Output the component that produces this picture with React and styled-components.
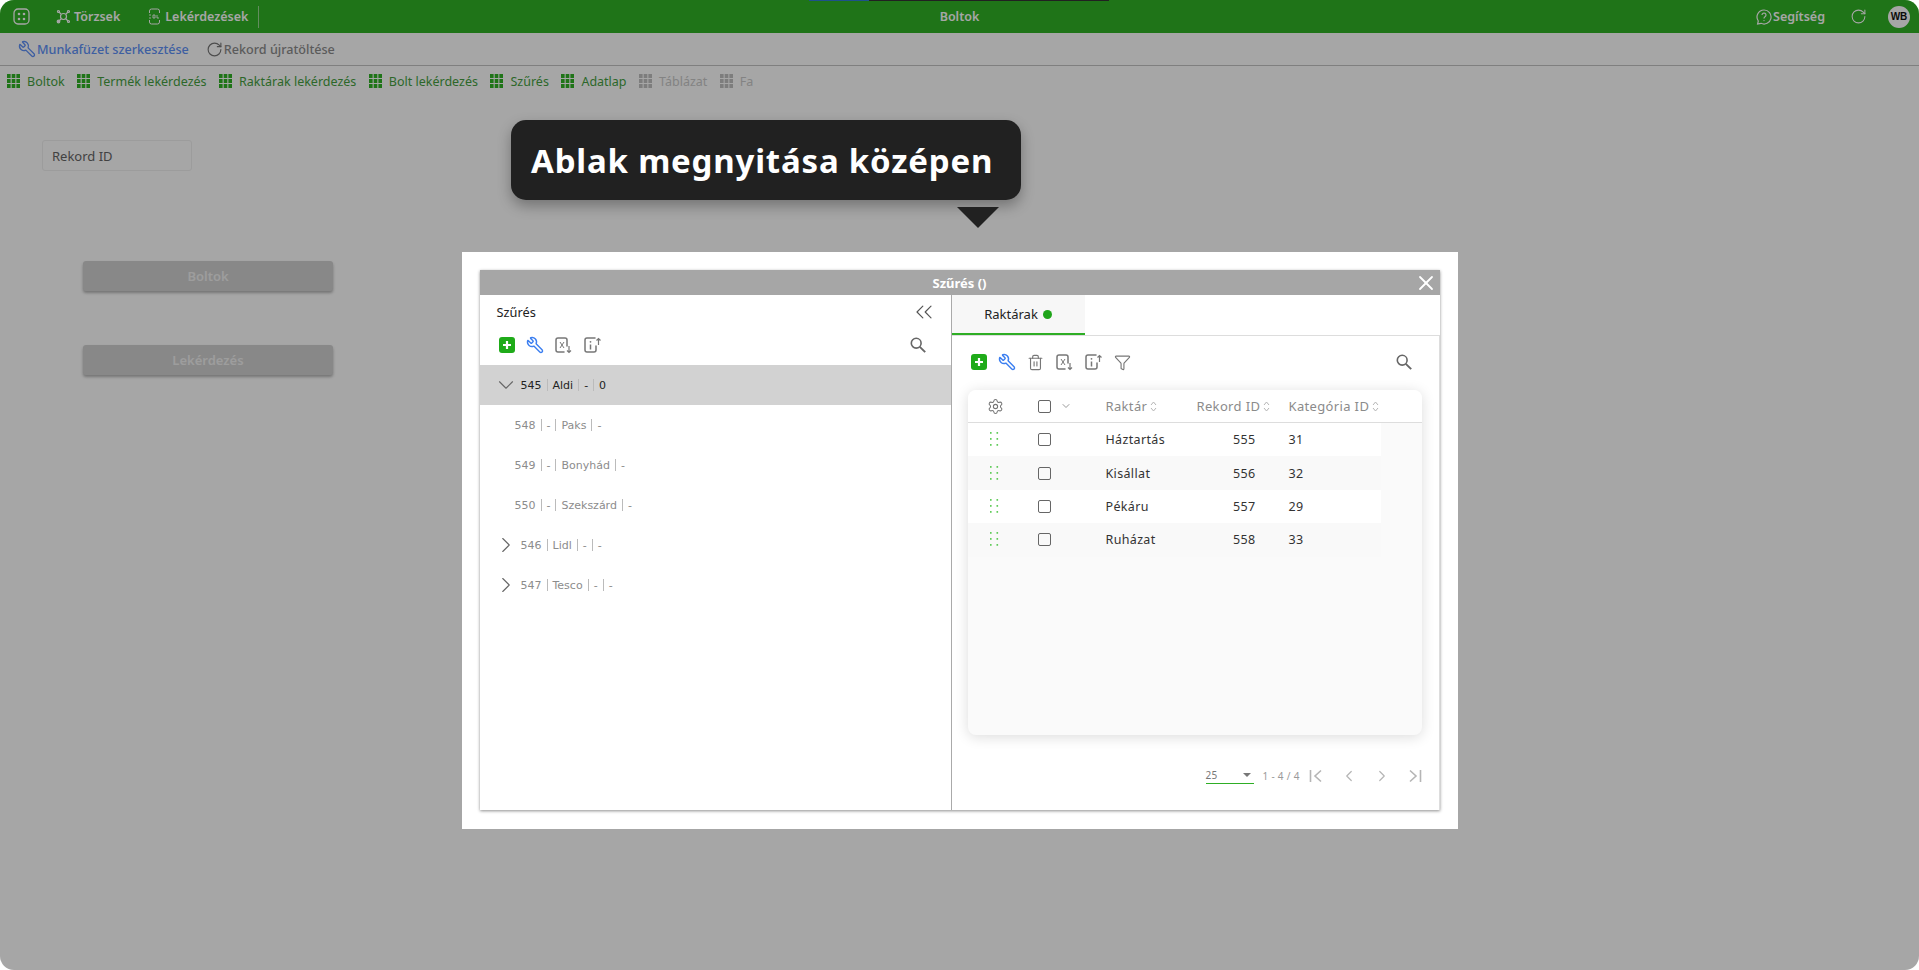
import React from "react";
import styled, { createGlobalStyle } from "styled-components";
import { Wrench, RotateCw, ChevronDown, ChevronRight, ChevronLeft, ChevronsLeft, Settings, Trash2, Funnel, X } from "lucide-react";

const Global = createGlobalStyle`
  html, body { margin: 0; padding: 0; background: #fff; overflow: hidden; }
  * { box-sizing: border-box; }
  #root { width: 1919px; height: 970px; }
`;

const Page = styled.div`
  position: relative;
  width: 1919px;
  height: 970px;
  background: #fff;
  border-radius: 14px;
  overflow: hidden;
  font-family: "Noto Sans", sans-serif;
`;

const Header = styled.header`
  position: relative;
  height: 33px;
  background: #30b226;
  color: #fff;
  display: flex;
  align-items: center;
  padding: 0 9px 0 13px;
  font-size: 12.5px;
  font-weight: 600;
`;
const HeaderItem = styled.div`
  display: flex;
  align-items: center;
  gap: ${(p) => p.$gap || 3}px;
  margin-left: ${(p) => p.$ml || 0}px;
`;
const Divider = styled.span`
  width: 1px;
  height: 22px;
  background: rgba(255, 255, 255, 0.5);
  margin-left: 10px;
`;
const HeaderTitle = styled.div`
  position: absolute;
  left: 0;
  right: 0;
  text-align: center;
  font-size: 12.5px;
  pointer-events: none;
`;
const ProgressBar = styled.div`
  position: absolute;
  left: 809px;
  top: 0;
  width: 300px;
  height: 1px;
  background: linear-gradient(to right, #2f7dd8 0 60px, #333 60px);
`;
const Spacer = styled.div`
  flex: 1;
`;
const Avatar = styled.div`
  width: 22px;
  height: 22px;
  border-radius: 50%;
  background: #fff;
  color: #111;
  font: 700 10px "Liberation Sans", sans-serif;
  display: flex;
  align-items: center;
  justify-content: center;
  margin-left: 21px;
`;

const ActionBar = styled.div`
  height: 33px;
  border-bottom: 1px solid #c4c4c4;
  display: flex;
  align-items: center;
  padding: 0 0 0 18px;
  font-size: 12.6px;
  font-weight: 500;
`;
const Action = styled.div`
  display: flex;
  align-items: center;
  gap: 1px;
  margin-right: 17px;
  color: ${(p) => (p.$blue ? "#6092f8" : "#8d8d8d")};
`;
const FlippedWrench = styled(Wrench)`
  transform: scaleX(-1);
  flex: none;
  margin: 0 ${(p) => p.$trim || 0}px;
`;

const TabBar = styled.nav`
  height: 30px;
  display: flex;
  align-items: center;
  padding-left: 7px;
  font-size: 12.5px;
`;
const SheetTab = styled.div`
  display: flex;
  align-items: center;
  gap: 7px;
  margin-right: 12.5px;
  color: ${(p) => (p.$off ? "#c9c9c9" : "#459f3f")};
`;

const Body = styled.main`
  padding: 44px 0 0 42px;
`;
const Field = styled.div`
  width: 150px;
  height: 31px;
  border: 1px solid #f0f0f0;
  border-radius: 3px;
  padding-left: 9px;
  display: flex;
  align-items: center;
  font-size: 13px;
  color: #666;
`;
const BigButton = styled.div`
  width: 250px;
  height: 30px;
  margin: ${(p) => p.$mt}px 0 0 41px;
  background: #d1d1d1;
  border-radius: 3px;
  box-shadow: 0 2px 3px rgba(0, 0, 0, 0.3);
  display: flex;
  align-items: center;
  justify-content: center;
  font-size: 13px;
  font-weight: 600;
  color: #f2f2f2;
`;

const Overlay = styled.div`
  position: absolute;
  inset: 0;
  background: rgba(0, 0, 0, 0.35);
  display: flex;
  justify-content: center;
  align-items: flex-start;
  padding-top: 252px;
`;
const Callout = styled.div`
  position: absolute;
  left: 511px;
  top: 120px;
  width: 510px;
  height: 80px;
  background: #212121;
  border-radius: 15px;
  box-shadow: 0 6px 14px rgba(0, 0, 0, 0.3);
  color: #fff;
  font-size: 33px;
  letter-spacing: 0.8px;
  font-weight: 700;
  display: flex;
  align-items: center;
  padding-left: 20px;
  &::after {
    content: "";
    position: absolute;
    left: 446px;
    top: 87px;
    border-left: 21px solid transparent;
    border-right: 21px solid transparent;
    border-top: 21px solid #212121;
  }
`;
const Modal = styled.div`
  width: 996px;
  height: 577px;
  background: #fff;
  padding: 18px;
`;
const Dialog = styled.div`
  height: 540px;
  display: flex;
  flex-direction: column;
  box-shadow: 0 1px 3px rgba(0, 0, 0, 0.45);
`;
const DialogTitle = styled.div`
  position: relative;
  height: 25px;
  flex: none;
  background: #a6a6a6;
  color: #fff;
  font-size: 13px;
  font-weight: 700;
  display: flex;
  align-items: center;
  justify-content: center;
`;
const CloseButton = styled.span`
  position: absolute;
  right: 2px;
  top: 1px;
  display: flex;
  color: #fff;
`;
const Split = styled.div`
  flex: 1;
  display: flex;
  min-height: 0;
`;
const LeftPane = styled.section`
  width: 472px;
  border-right: 1px solid #aaa;
  display: flex;
  flex-direction: column;
`;
const PaneHead = styled.div`
  height: 30px;
  display: flex;
  align-items: center;
  justify-content: space-between;
  padding: 4px 13px 0 17px;
  font-size: 12.8px;
  color: #222;
`;
const IconRow = styled.div`
  display: flex;
  align-items: center;
  height: ${(p) => p.$h}px;
  padding: ${(p) => p.$pad};
  gap: 12px;
  color: #8a8a8a;
`;
const TreeRow = styled.div`
  height: 40px;
  display: flex;
  align-items: center;
  padding-left: ${(p) => (p.$leaf ? 35 : 13)}px;
  background: ${(p) => (p.$selected ? "#d2d2d2" : "transparent")};
  color: ${(p) => (p.$selected ? "#222" : "#8c8c8c")};
  font: 11px "DejaVu Sans", sans-serif;
  white-space: pre;
`;
const Caret = styled.span`
  width: 26px;
  display: flex;
  margin-right: 2px;
  color: #666;
`;
const Sep = styled.span`
  display: inline-block;
  width: 1px;
  height: 12px;
  margin: 0 5px;
  background: #bbb;
`;
const RightPane = styled.section`
  flex: 1;
  display: flex;
  flex-direction: column;
  min-width: 0;
`;
const Tabs = styled.div`
  height: 41px;
  flex: none;
  border-bottom: 1px solid #ddd;
  display: flex;
`;
const Tab = styled.div`
  width: 133px;
  height: 40px;
  background: #f7f7f7;
  border-bottom: 2px solid #2eae25;
  display: flex;
  align-items: center;
  justify-content: center;
  gap: 5px;
  font-size: 13px;
  color: #222;
`;
const Dot = styled.span`
  width: 9px;
  height: 9px;
  border-radius: 50%;
  background: #1fa51a;
`;
const TabBody = styled.div`
  flex: 1;
  padding: 0 17px 0 16px;
  border-right: 1px solid #ddd;
`;
const Card = styled.div`
  height: 345px;
  background: #fafafa;
  border-radius: 8px;
  box-shadow: 0 2px 14px rgba(0, 0, 0, 0.14);
  overflow: hidden;
  color: #333;
  font-size: 12.5px;
  letter-spacing: 0.35px;
`;
const gridCols = "70px 68px 91px 92px 92px";
const HeadRow = styled.div`
  height: 33px;
  display: grid;
  grid-template-columns: ${gridCols};
  align-items: center;
  background: #fff;
  border-bottom: 1px solid #ddd;
  color: #8b8b8b;
  font-size: 13px;
`;
const DataRow = styled.div`
  height: 33.4px;
  width: 413px;
  display: grid;
  grid-template-columns: ${gridCols};
  align-items: center;
  background: ${(p) => (p.$alt ? "#f9f9f9" : "#fff")};
`;
const Cell = styled.div`
  display: flex;
  align-items: center;
  justify-content: ${(p) => (p.$right ? "flex-end" : "flex-start")};
  padding-right: ${(p) => (p.$right ? 33 : 0)}px;
  gap: ${(p) => p.$gap || 0}px;
  padding-left: ${(p) => p.$pl || 0}px;
`;
const Checkbox = styled.span`
  width: 13px;
  height: 13px;
  border: 1px solid #666;
  border-radius: 2px;
`;
const Pager = styled.div`
  height: 72px;
  margin-right: -17px;
  padding: 9px 0 0 238px;
  display: flex;
  align-items: center;
  color: #9a9a9a;
  font-size: 10px;
  letter-spacing: 0.3px;
  white-space: nowrap;
`;
const PageSelect = styled.div`
  flex: none;
  width: 48px;
  height: 17px;
  border-bottom: 1px solid #2eae25;
  display: flex;
  align-items: center;
  justify-content: space-between;
  color: #777;
  padding-right: 3px;
  &::after {
    content: "";
    border-left: 4px solid transparent;
    border-right: 4px solid transparent;
    border-top: 4px solid #777;
  }
`;
const PageText = styled.span`
  flex: none;
  width: 46px;
  padding-left: 9px;
`;
const PageBtn = styled.span`
  flex: none;
  width: 33px;
  display: flex;
  justify-content: center;
  color: #b5b5b5;
`;

const GridIcon = ({ off }) => (
  <svg width="13" height="14" viewBox="0 0 13 14" fill={off ? "#c0c0c0" : "#30b226"}>
    {[0, 4.7, 9.4].map((x) =>
      [0, 5, 10].map((y) => <rect key={`${x}${y}`} x={x} y={y} width="3.6" height="4" />)
    )}
  </svg>
);
const AddIcon = () => (
  <svg width="16" height="16" viewBox="0 0 16 16">
    <rect width="16" height="16" rx="3" fill="#1fab19" />
    <path d="M8 4v8M4 8h8" stroke="#fff" strokeWidth="2.2" />
  </svg>
);
const SearchIcon = () => (
  <svg width="16" height="16" viewBox="0 0 16 16" fill="none" stroke="#666" strokeWidth="1.6">
    <circle cx="6.2" cy="6.2" r="4.9" />
    <path d="M9.8 9.8l5.4 5.4" strokeWidth="1.9" />
  </svg>
);
const ExcelIcon = () => (
  <svg width="17" height="17" viewBox="0 0 17 17" fill="none" stroke="#777" strokeWidth="1.5">
    <path d="M12 9V3a2 2 0 0 0-2-2H3a2 2 0 0 0-2 2v10a2 2 0 0 0 2 2h6" strokeLinecap="round" />
    <path d="M5 5l4 6M9 5l-4 6" strokeWidth="1" />
    <path d="M14 9v6M12 13.5l2 2 2-2" strokeWidth="1.2" />
  </svg>
);
const InfoIcon = () => (
  <svg width="17" height="17" viewBox="0 0 17 17" fill="none" stroke="#777" strokeWidth="1.5">
    <path d="M11 1H3a2 2 0 0 0-2 2v10a2 2 0 0 0 2 2h7a2 2 0 0 0 2-2V9" strokeLinecap="round" />
    <path d="M6.5 7.5v5" strokeWidth="1.5" />
    <circle cx="6.5" cy="4.8" r="0.9" fill="#777" stroke="none" />
    <path d="M14.5 8V2M12.5 3.5l2-2 2 2" strokeWidth="1.2" />
  </svg>
);
const Drag = () => (
  <svg width="9" height="15" viewBox="0 0 9 15" fill="#63cc5c">
    {[0, 6.5].map((x) => [0, 6, 12].map((y) => <rect key={`${x}${y}`} x={x} y={y} width="1.6" height="1.8" />))}
  </svg>
);
const Sort = () => (
  <svg width="7" height="11" viewBox="0 0 7 11" fill="none" stroke="#b5b5b5" strokeWidth="1">
    <path d="M1 4l2.5-3L6 4M1 7l2.5 3L6 7" />
  </svg>
);
const AppIcon = () => (
  <svg width="17" height="17" viewBox="0 0 17 17" fill="none" stroke="#fff" strokeWidth="1.3">
    <rect x="1" y="1" width="15" height="15" rx="4" />
    <g fill="#fff" stroke="none">
      <circle cx="6" cy="6" r="1.3" />
      <circle cx="11" cy="6" r="1.3" />
      <circle cx="6" cy="11" r="1.3" />
      <circle cx="11" cy="11" r="1.3" />
    </g>
  </svg>
);
const NodesIcon = () => (
  <svg width="15" height="15" viewBox="0 0 15 15" fill="none" stroke="#fff" strokeWidth="1.2">
    <circle cx="7.5" cy="7.5" r="3" />
    <path d="M5 5L3 3M10 5l2-2M5 10l-2 2M10 10l2 2" />
    <circle cx="2.5" cy="2.5" r="1" />
    <circle cx="12.5" cy="2.5" r="1" />
    <circle cx="2.5" cy="12.5" r="1.3" fill="#fff" />
    <circle cx="12.5" cy="12.5" r="1" />
  </svg>
);
const SqlIcon = () => (
  <svg width="13" height="17" viewBox="0 0 13 17" fill="none" stroke="#fff" strokeWidth="1">
    <path d="M1.5 5V3a2 2 0 0 1 2-2h6a2 2 0 0 1 2 2v2M1.5 12v2a2 2 0 0 0 2 2h6a2 2 0 0 0 2-2v-2" />
    <path d="M1 7h2M1 10h2M5 7h2v3H5zM9 7v3h2" strokeWidth="0.9" />
  </svg>
);
const HelpIcon = () => (
  <svg width="16" height="16" viewBox="0 0 16 16" fill="none" stroke="#fff" strokeWidth="1.2">
    <path d="M8 1a7 7 0 1 1-3 13.3L1.6 15l.7-3A7 7 0 0 1 8 1z" />
    <path d="M6 6a2 2 0 1 1 3 1.8c-.7.4-1 .8-1 1.6" />
    <circle cx="8" cy="11.6" r=".7" fill="#fff" stroke="none" />
  </svg>
);
const FirstIcon = ({ flip }) => (
  <svg width="14" height="14" viewBox="0 0 14 14" fill="none" stroke="#b5b5b5" strokeWidth="1.6" style={flip ? { transform: "scaleX(-1)" } : undefined}>
    <path d="M1.5 1v12M12 1.5L6 7l6 5.5" />
  </svg>
);

const sheets = [
  ["Boltok"], ["Termék lekérdezés"], ["Raktárak lekérdezés"], ["Bolt lekérdezés"], ["Szűrés"], ["Adatlap"],
  ["Táblázat", true], ["Fa", true],
];
const tree = [
  { parts: ["545", "Aldi", "-", "0"], open: true, selected: true },
  { parts: ["548", "-", "Paks", "-"], leaf: true },
  { parts: ["549", "-", "Bonyhád", "-"], leaf: true },
  { parts: ["550", "-", "Szekszárd", "-"], leaf: true },
  { parts: ["546", "Lidl", "-", "-"] },
  { parts: ["547", "Tesco", "-", "-"] },
];
const rows = [
  ["Háztartás", 555, 31],
  ["Kisállat", 556, 32],
  ["Pékáru", 557, 29],
  ["Ruházat", 558, 33],
];

export default function App() {
  return (
    <Page>
      <Global />
      <Header>
        <ProgressBar />
        <AppIcon />
        <HeaderItem $ml={26}><NodesIcon />Törzsek</HeaderItem>
        <HeaderItem $ml={28} $gap={4}><SqlIcon />Lekérdezések</HeaderItem>
        <Divider />
        <HeaderTitle>Boltok</HeaderTitle>
        <Spacer />
        <HeaderItem $gap={1}><HelpIcon />Segítség</HeaderItem>
        <HeaderItem $ml={25}><RotateCw size={17} strokeWidth={1.5} color="#fff" /></HeaderItem>
        <Avatar>WB</Avatar>
      </Header>
      <ActionBar>
        <Action $blue><FlippedWrench size={18} strokeWidth={1.8} />Munkafüzet szerkesztése</Action>
        <Action><RotateCw size={17} strokeWidth={1.6} color="#777" />Rekord újratöltése</Action>
      </ActionBar>
      <TabBar>
        {sheets.map(([name, off]) => (
          <SheetTab key={name} $off={off}><GridIcon off={off} />{name}</SheetTab>
        ))}
      </TabBar>
      <Body>
        <Field>Rekord ID</Field>
        <BigButton $mt={90}>Boltok</BigButton>
        <BigButton $mt={54}>Lekérdezés</BigButton>
      </Body>
      <Overlay>
        <Callout>Ablak megnyitása középen</Callout>
        <Modal>
          <Dialog>
            <DialogTitle>
              Szűrés ()
              <CloseButton><X size={24} strokeWidth={1.8} /></CloseButton>
            </DialogTitle>
            <Split>
              <LeftPane>
                <PaneHead>
                  <span>Szűrés</span>
                  <ChevronsLeft size={28} strokeWidth={1} color="#555" />
                </PaneHead>
                <IconRow $h={40} $pad="0 25px 0 19px">
                  <AddIcon />
                  <FlippedWrench size={18} strokeWidth={1.9} color="#3c7ff0" $trim={-1} />
                  <ExcelIcon />
                  <InfoIcon />
                  <Spacer />
                  <SearchIcon />
                </IconRow>
                {tree.map((t) => (
                  <TreeRow key={t.parts[0]} $leaf={t.leaf} $selected={t.selected}>
                    {!t.leaf && (
                      <Caret>
                        {t.open ? <ChevronDown size={26} strokeWidth={1} /> : <ChevronRight size={26} strokeWidth={1} />}
                      </Caret>
                    )}
                    {t.parts.map((p, i) => (
                      <React.Fragment key={i}>
                        {i > 0 && <Sep />}
                        {p}
                      </React.Fragment>
                    ))}
                  </TreeRow>
                ))}
              </LeftPane>
              <RightPane>
                <Tabs>
                  <Tab>Raktárak <Dot /></Tab>
                </Tabs>
                <TabBody>
                  <IconRow $h={54} $pad="0 10px 2px 3px">
                    <AddIcon />
                    <FlippedWrench size={18} strokeWidth={1.9} color="#3c7ff0" $trim={-1} />
                    <Trash2 size={17} strokeWidth={1.6} color="#777" />
                    <ExcelIcon />
                    <InfoIcon />
                    <Funnel size={17} strokeWidth={1.6} color="#777" />
                    <Spacer />
                    <SearchIcon />
                  </IconRow>
                  <Card>
                    <HeadRow>
                      <Cell $pl={19}><Settings size={17} strokeWidth={1.5} color="#777" /></Cell>
                      <Cell $gap={9}><Checkbox /><ChevronDown size={12} strokeWidth={1.5} color="#777" /></Cell>
                      <Cell $gap={3}>Raktár <Sort /></Cell>
                      <Cell $gap={3}>Rekord ID <Sort /></Cell>
                      <Cell $gap={3}>Kategória ID <Sort /></Cell>
                    </HeadRow>
                    {rows.map((r, i) => (
                      <DataRow key={r[0]} $alt={i % 2 === 1}>
                        <Cell $pl={22}><Drag /></Cell>
                        <Cell><Checkbox /></Cell>
                        <Cell>{r[0]}</Cell>
                        <Cell $right>{r[1]}</Cell>
                        <Cell>{r[2]}</Cell>
                      </DataRow>
                    ))}
                  </Card>
                  <Pager>
                    <PageSelect>25</PageSelect>
                    <PageText>1 - 4 / 4</PageText>
                    <PageBtn><FirstIcon /></PageBtn>
                    <PageBtn><ChevronLeft size={18} strokeWidth={1.6} /></PageBtn>
                    <PageBtn><ChevronRight size={18} strokeWidth={1.6} /></PageBtn>
                    <PageBtn><FirstIcon flip /></PageBtn>
                  </Pager>
                </TabBody>
              </RightPane>
            </Split>
          </Dialog>
        </Modal>
      </Overlay>
    </Page>
  );
}
